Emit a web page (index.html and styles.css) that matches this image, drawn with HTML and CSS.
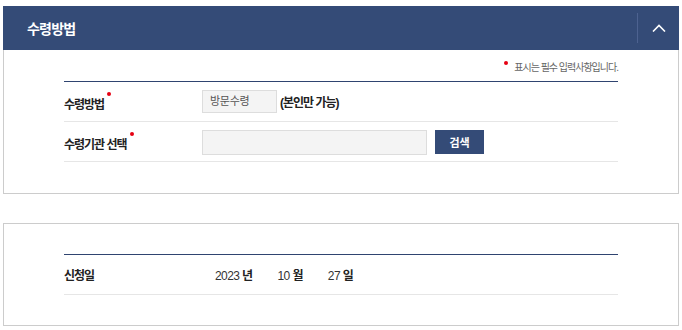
FILE: index.html
```html
<!DOCTYPE html>
<html>
<head>
    <title>수령방법</title>
    <link rel="stylesheet" href="styles.css">
</head>
<body>
    <div class="panel">
        <div class="panel-head">
            <h2>수령방법</h2>
            <button class="toggle" type="button">
                <svg width="14" height="8" viewBox="0 0 14 8"><polyline points="1,7.5 7,1.5 13,7.5" fill="none" stroke="#fff" stroke-width="1.6"/></svg>
            </button>
        </div>
        <div class="panel-body">
            <p class="note"><span class="dot"></span>표시는 필수 입력사항입니다.</p>
            <div class="form">
                <div class="row">
                    <div class="label">수령방법<span class="dot"></span></div>
                    <div class="value">
                        <span class="box">방문수령</span>
                        <strong>(본인만 가능)</strong>
                    </div>
                </div>
                <div class="row">
                    <div class="label">수령기관 선택<span class="dot"></span></div>
                    <div class="value">
                        <input type="text" class="search-input">
                        <button class="btn" type="button">검색</button>
                    </div>
                </div>
            </div>
        </div>
    </div>

    <div class="panel second">
        <div class="panel-body">
            <div class="form">
                <div class="row">
                    <div class="label">신청일</div>
                    <div class="value date">
                        <span>2023 <b>년</b></span>
                        <span>10 <b>월</b></span>
                        <span>27 <b>일</b></span>
                    </div>
                </div>
            </div>
        </div>
    </div>
</body>
</html>
```

FILE: styles.css
```css
body {
    margin: 6px 3px;
    font-family: 'Liberation Sans', 'Noto Sans CJK KR', sans-serif;
    font-size: 12px;
    color: #333;
    background-color: #fff;
}

.panel-head {
    display: flex;
    align-items: center;
    height: 44px;
    background-color: #344b77;
}

    .panel-head h2 {
        flex: 1;
        margin: 0;
        padding-left: 24px;
        font-size: 14px;
        font-weight: bold;
        color: #fff;
        letter-spacing: -0.8px;
    }

.toggle {
    display: flex;
    justify-content: center;
    align-items: center;
    width: 42px;
    height: 30px;
    padding: 0;
    border: none;
    border-left: 1px solid #4d6290;
    background: none;
    cursor: pointer;
}

.panel-body {
    padding: 0 60px 31px;
    border: 1px solid #ccc;
    border-top: none;
}

.second {
    margin-top: 29px;
}

    .second .panel-body {
        padding-top: 30px;
        padding-bottom: 30px;
        border-top: 1px solid #ccc;
    }

.note {
    margin: 0 0 4px;
    padding-top: 9px;
    line-height: 18px;
    font-size: 10px;
    color: #666;
    text-align: right;
    letter-spacing: -1px;
}

    .note .dot {
        margin: 0 6px 0 0;
        vertical-align: 6px;
    }

.dot {
    display: inline-block;
    width: 4px;
    height: 4px;
    margin-left: 3px;
    border-radius: 50%;
    background-color: #e60012;
    vertical-align: 13px;
}

.form {
    border-top: 1px solid #2f4470;
}

.row {
    display: flex;
    align-items: center;
    height: 39px;
    border-bottom: 1px solid #e6e6e6;
}

.label {
    width: 138px;
    font-weight: bold;
    color: #222;
    letter-spacing: -1px;
}

.value {
    display: flex;
    align-items: center;
}

.box {
    width: 66px;
    height: 21px;
    line-height: 21px;
    padding-left: 7px;
    border: 1px solid #ddd;
    background-color: #f4f4f4;
    font-size: 11px;
    color: #555;
    letter-spacing: -0.3px;
}

.value strong {
    margin-left: 3px;
    color: #222;
    letter-spacing: -1px;
}

.search-input {
    box-sizing: border-box;
    width: 225px;
    height: 25px;
    margin: 1px 0 0;
    border: 1px solid #ddd;
    background-color: #f4f4f4;
}

.btn {
    width: 49px;
    height: 24px;
    margin: 1px 0 0 8px;
    padding: 0;
    border: none;
    background-color: #344b77;
    color: #fff;
    font-family: inherit;
    font-size: 11px;
    font-weight: bold;
    cursor: pointer;
}

.date {
    padding-left: 13px;
    color: #333;
}

    .date span {
        margin-right: 25px;
        letter-spacing: -0.6px;
    }

    .date b {
        color: #222;
    }
```
